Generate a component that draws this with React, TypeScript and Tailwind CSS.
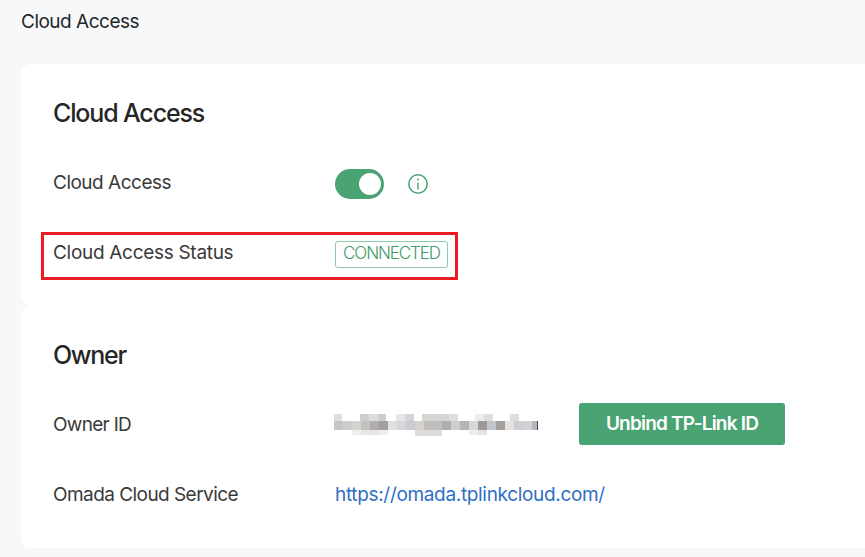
// pixelated owner id: [x, y, w, h, colour]
const mosaic: [number, number, number, number, string][] = [
  [0, 0, 8, 7, '#dcdcdc'], [26, 0, 9, 7, '#d0cecc'], [35, 0, 9, 7, '#dcdddf'], [44, 0, 8, 7, '#cecdcd'],
  [62, 0, 9, 7, '#e6e6e8'], [71, 0, 9, 7, '#d4d4d6'], [88, 0, 27, 7, '#d6d5d3'], [115, 0, 9, 7, '#dedede'],
  [141, 0, 9, 7, '#ececec'], [150, 0, 9, 7, '#dedede'], [176, 0, 9, 7, '#dedfe0'],
  [0, 7, 9, 9, '#c5c5c5'], [9, 7, 9, 9, '#cecece'], [18, 7, 9, 9, '#d7d3ce'], [27, 7, 9, 9, '#c4c2c0'],
  [36, 7, 9, 9, '#b1adab'], [45, 7, 9, 9, '#a49f9e'], [54, 7, 9, 9, '#e0e0e0'], [63, 7, 9, 9, '#d7d7db'],
  [72, 7, 9, 9, '#cbcbd0'], [81, 7, 9, 9, '#d4d1ce'], [90, 7, 9, 9, '#c1bdb8'], [99, 7, 9, 9, '#c0bebe'],
  [108, 7, 9, 9, '#acafb2'], [117, 7, 9, 9, '#cdcdcd'], [126, 7, 9, 9, '#b4b4b4'], [135, 7, 9, 9, '#d8d8d8'],
  [144, 7, 9, 9, '#9d9999'], [153, 7, 9, 9, '#bfc6ce'], [162, 7, 9, 9, '#a6a19d'], [171, 7, 9, 9, '#e2e2e2'],
  [180, 7, 9, 9, '#ccced1'], [189, 7, 9, 9, '#ced2d6'], [198, 7, 6, 9, '#b5b5b5'], [203, 7, 1, 9, '#34466e'],
  [18, 16, 9, 5, '#eeeeee'], [27, 16, 9, 5, '#e8e8e8'], [36, 16, 9, 5, '#e6e6e6'], [45, 16, 9, 5, '#eeeeee'],
  [81, 16, 27, 6, '#dedbd9'], [135, 16, 9, 5, '#eeeeee'], [144, 16, 9, 5, '#e4e4e4'],
]

export default function App() {
  return (
    <div className="w-[865px] h-[557px] overflow-hidden bg-[#f6f8fa] font-['Inter',sans-serif] text-[#262626]">
      <div className="h-[64px] pl-[21px] pt-[11px] text-[19px] leading-[22px] tracking-[-0.5px]">Cloud Access</div>

      <div className="ml-[21px] w-[860px]">
        {/* Cloud Access card */}
        <section className="h-[242px] rounded-[10px] bg-white pl-[32px] pt-[34px]">
          <h2 className="text-[25px] leading-[30px] font-medium tracking-[-1.15px]">Cloud Access</h2>
          <div className="mt-[37px] flex h-[38px] items-center">
            <span className="w-[282px] text-[19px] leading-[22px] tracking-[-0.5px] text-[#3a3a3a] -mt-[3px]">Cloud Access</span>
            <div className="relative h-[30px] w-[49px] rounded-full bg-[#4aa373]">
              <div className="absolute top-[4px] left-[24px] h-[22px] w-[22px] rounded-full bg-white" />
            </div>
            <svg width="20" height="20" viewBox="0 0 20 20" fill="none" stroke="#4aa373" className="ml-[24px] -mt-[1px]">
              <circle cx="10" cy="10" r="9.2" strokeWidth="1.5" />
              <path d="M10 8.5V15.5" strokeWidth="1.4" />
              <circle cx="10" cy="5.6" r="1" fill="#4aa373" stroke="none" />
            </svg>
          </div>
          <div className="relative mt-[32px] flex h-[38px] items-center">
            {/* red highlight drawn over the row */}
            <div className="absolute -left-[12px] -top-[3px] h-[48px] w-[417px] border-[3px] border-[#ed1c24]" />
            <span className="w-[282px] text-[19px] leading-[22px] tracking-[-0.3px] text-[#3a3a3a] -mt-[3px]">Cloud Access Status</span>
            <span className="flex h-[27px] w-[113px] items-center justify-center rounded-[3px] border border-[#8fc7a9] text-[17px] font-light text-[#3f9a69] tracking-[-1.1px]">
              CONNECTED
            </span>
          </div>
        </section>

        {/* Owner card */}
        <section className="h-[242px] rounded-[10px] bg-white pl-[32px] pt-[34px]">
          <h2 className="text-[25px] leading-[30px] font-medium tracking-[-1.3px]">Owner</h2>
          <div className="mt-[33px] flex h-[42px] items-center">
            <span className="w-[282px] text-[19px] leading-[22px] text-[#3a3a3a] tracking-[-0.7px] mt-[1px]">Owner ID</span>
            <svg width="204" height="22" className="mt-[2px] -ml-[1px]">
              {mosaic.map(([x, y, w, h, c], i) => (
                <rect key={i} x={x} y={y} width={w} height={h} fill={c} />
              ))}
            </svg>
            <button className="ml-[41px] h-[42px] w-[206px] rounded-[3px] bg-[#4aa373] text-[19px] font-semibold tracking-[-0.8px] text-white">
              Unbind TP-Link ID
            </button>
          </div>
          <div className="mt-[28px] flex h-[42px] items-center">
            <span className="w-[282px] text-[19px] leading-[22px] tracking-[-0.55px] text-[#3a3a3a] mt-[1px]">Omada Cloud Service</span>
            <a className="text-[19px] leading-[22px] tracking-[-0.33px] text-[#2f6fc4] mt-[1px]">https://omada.tplinkcloud.com/</a>
          </div>
        </section>
      </div>
    </div>
  )
}
